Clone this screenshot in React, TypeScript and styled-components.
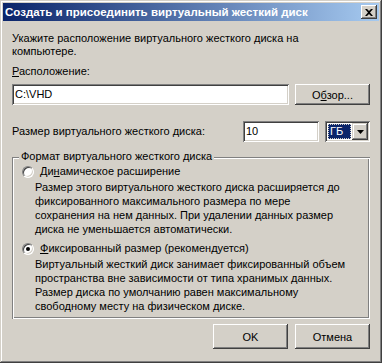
import React from 'react'
import styled, { createGlobalStyle } from 'styled-components'

const GlobalStyle = createGlobalStyle`
  html, body {
    margin: 0;
    padding: 0;
    background: #d4d0c8;
  }
  * {
    box-sizing: border-box;
  }
`

const FONT = `"Liberation Sans", Arial, sans-serif`

const Window = styled.div`
  width: 382px;
  height: 363px;
  padding: 3px;
  background: #d4d0c8;
  font-family: ${FONT};
  font-size: 11px;
  color: #000;
  display: flex;
  flex-direction: column;
  box-shadow: inset -1px -1px 0 #404040, inset 1px 1px 0 #d4d0c8,
    inset -2px -2px 0 #808080, inset 2px 2px 0 #ffffff;
`

const TitleBar = styled.div`
  height: 18px;
  flex: 0 0 auto;
  display: flex;
  align-items: center;
  padding: 0 2px 0 2px;
  background: linear-gradient(to right, #0a246a, #a6caf0);
  color: #fff;
  font-weight: bold;
  font-size: 11.5px;
`

const Title = styled.span`
  flex: 1 1 auto;
  white-space: nowrap;
`

const CloseButton = styled.div`
  width: 16px;
  height: 14px;
  background: #d4d0c8;
  box-shadow: inset -1px -1px 0 #404040, inset 1px 1px 0 #ffffff,
    inset -2px -2px 0 #808080;
  display: flex;
  align-items: center;
  justify-content: center;
`

const Body = styled.div`
  flex: 1 1 auto;
  display: flex;
  flex-direction: column;
  padding: 11px 9px 0 9px;
`

const Text = styled.div<{ $mt?: number }>`
  line-height: 13px;
  margin-top: ${({ $mt }) => $mt ?? 0}px;
  white-space: nowrap;
`

const Row = styled.div<{ $mt?: number }>`
  display: flex;
  align-items: center;
  margin-top: ${({ $mt }) => $mt ?? 0}px;
`

const Field = styled.div<{ $w: number }>`
  width: ${({ $w }) => $w}px;
  height: 21px;
  background: #fff;
  padding: 3px 3px 0 3px;
  line-height: 14px;
  box-shadow: inset 1px 1px 0 #808080, inset -1px -1px 0 #ffffff,
    inset 2px 2px 0 #404040, inset -2px -2px 0 #d4d0c8;
`

const Button = styled.div<{ $w: number; $h?: number }>`
  width: ${({ $w }) => $w}px;
  height: ${({ $h }) => $h ?? 21}px;
  background: #d4d0c8;
  display: flex;
  align-items: center;
  justify-content: center;
  box-shadow: inset -1px -1px 0 #404040, inset 1px 1px 0 #ffffff,
    inset -2px -2px 0 #808080;
`

const Combo = styled.div`
  width: 45px;
  height: 21px;
  background: #fff;
  padding: 2px;
  display: flex;
  box-shadow: inset 1px 1px 0 #808080, inset -1px -1px 0 #ffffff,
    inset 2px 2px 0 #404040, inset -2px -2px 0 #d4d0c8;
`

const ComboValue = styled.div`
  flex: 1 1 auto;
  margin: 1px;
  background: #0a246a;
  color: #fff;
  outline: 1px dotted #d4d0c8;
  outline-offset: -1px;
  padding-left: 2px;
  line-height: 15px;
`

const ComboArrow = styled.div`
  width: 16px;
  flex: 0 0 auto;
  background: #d4d0c8;
  display: flex;
  align-items: center;
  justify-content: center;
  box-shadow: inset -1px -1px 0 #404040, inset 1px 1px 0 #d4d0c8,
    inset -2px -2px 0 #808080, inset 2px 2px 0 #ffffff;
`

const Group = styled.fieldset`
  margin: 8px 0 0 0;
  padding: 0 8px 0 10px;
  height: 169px;
  border: none;
  box-shadow: inset 1px 1px 0 #808080, inset -1px -1px 0 #ffffff,
    inset 2px 2px 0 #ffffff, inset -2px -2px 0 #808080;
`

const Legend = styled.legend`
  padding: 0 2px;
  margin-left: -3px;
  line-height: 13px;
  background: #d4d0c8;
`

const RadioRow = styled.div<{ $mt?: number }>`
  display: flex;
  align-items: center;
  gap: 6px;
  line-height: 13px;
  margin-top: ${({ $mt }) => $mt ?? 0}px;
`

const RadioCircle = styled.div<{ $checked?: boolean }>`
  width: 12px;
  height: 12px;
  border-radius: 50%;
  background: #fff;
  border: 1px solid;
  border-color: #808080 #ffffff #ffffff #808080;
  box-shadow: inset 1px 1px 0 #404040, inset -1px -1px 0 #d4d0c8;
  display: flex;
  align-items: center;
  justify-content: center;
  flex: 0 0 auto;
  &::after {
    content: '';
    display: ${({ $checked }) => ($checked ? 'block' : 'none')};
    width: 4px;
    height: 4px;
    border-radius: 50%;
    background: #000;
  }
`

const Description = styled.div`
  margin: 2px 0 0 13px;
  line-height: 14px;
  white-space: nowrap;
`

const Footer = styled.div`
  display: flex;
  justify-content: flex-end;
  gap: 7px;
  margin-top: 5px;
`

const U = styled.span`
  text-decoration: underline;
`

export default function App() {
  return (
    <>
      <GlobalStyle />
      <Window>
        <TitleBar>
          <Title>Создать и присоединить виртуальный жесткий диск</Title>
          <CloseButton>
            <svg width="8" height="7" viewBox="0 0 8 7">
              <path
                d="M0 0h2l2 2 2-2h2L5 3.5 8 7H6L4 5 2 7H0l3-3.5z"
                fill="#000"
              />
            </svg>
          </CloseButton>
        </TitleBar>
        <Body>
          <Text>Укажите расположение виртуального жесткого диска на</Text>
          <Text>компьютере.</Text>
          <Text $mt={7}>
            <U>Р</U>асположение:
          </Text>
          <Row $mt={6}>
            <Field $w={277}>C:\VHD</Field>
            <Button $w={75} style={{ marginLeft: 6 }}>
              <span>
                О<U>б</U>зор...
              </span>
            </Button>
          </Row>
          <Row $mt={16}>
            <Text style={{ width: 231 }}>Размер виртуального жесткого диска:</Text>
            <Field $w={76}>10</Field>
            <Combo style={{ marginLeft: 6 }}>
              <ComboValue>ГБ</ComboValue>
              <ComboArrow>
                <svg width="7" height="4" viewBox="0 0 7 4">
                  <path d="M0 0h7L3.5 4z" fill="#000" />
                </svg>
              </ComboArrow>
            </Combo>
          </Row>
          <Group>
            <Legend>Формат виртуального жесткого диска</Legend>
            <RadioRow $mt={2}>
              <RadioCircle />
              <span>
                Ди<U>н</U>амическое расширение
              </span>
            </RadioRow>
            <Description>
              Размер этого виртуального жесткого диска расширяется до
              <br />
              фиксированного максимального размера по мере
              <br />
              сохранения на нем данных. При удалении данных размер
              <br />
              диска не уменьшается автоматически.
            </Description>
            <RadioRow $mt={6}>
              <RadioCircle $checked />
              <span>
                <U>Ф</U>иксированный размер (рекомендуется)
              </span>
            </RadioRow>
            <Description>
              Виртуальный жесткий диск занимает фиксированный объем
              <br />
              пространства вне зависимости от типа хранимых данных.
              <br />
              Размер диска по умолчанию равен максимальному
              <br />
              свободному месту на физическом диске.
            </Description>
          </Group>
          <Footer>
            <Button $w={75} $h={25}>OK</Button>
            <Button $w={75} $h={25}>Отмена</Button>
          </Footer>
        </Body>
      </Window>
    </>
  )
}
